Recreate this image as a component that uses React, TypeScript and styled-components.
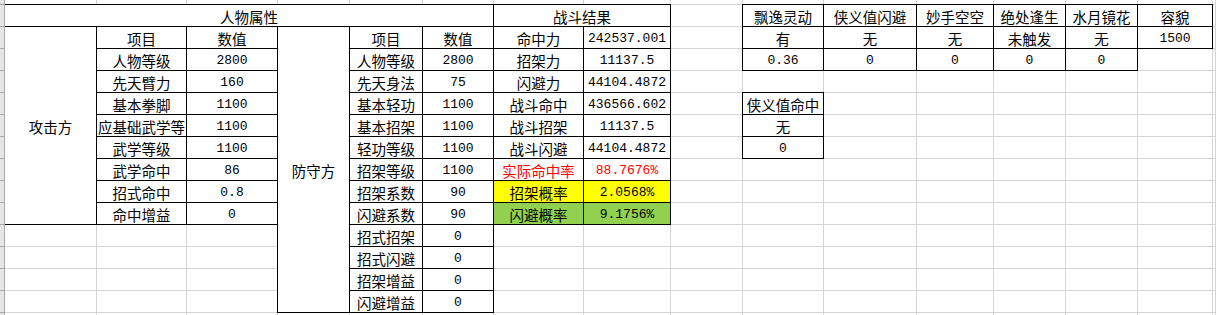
import { createGlobalStyle } from "styled-components";
import styled from "styled-components";

const GlobalStyle = createGlobalStyle`
  html, body {
    margin: 0;
    padding: 0;
    background: #FFFFFF;
    overflow: hidden;
  }
`;

// column widths include the 1px gridline on the right of each column
const COL_WIDTHS = [5, 92, 90, 91, 72, 73, 71, 90, 87, 72, 81, 93, 77, 72, 72, 75, 3];
const ROW_COUNT = 16; // partial top row, 14 sheet rows, partial bottom row

type Tone = "red" | "yellow" | "green";

interface CellData {
  r: number; // sheet row, 1 based
  c: number; // sheet column, A = 1
  rs?: number;
  cs?: number;
  text?: string;
  boxed?: boolean;
  tone?: Tone;
}

const Sheet = styled.div`
  display: grid;
  grid-template-columns: ${COL_WIDTHS.map((w) => `${w}px`).join(" ")};
  grid-template-rows: 5px repeat(14, 22px) 3px;
  width: 1216px;
  height: 315px;
  overflow: hidden;
  font-family: "Noto Sans CJK SC", "Noto Sans", sans-serif;
  font-size: 14.5px;
  color: #000000;
`;

const RowHeader = styled.div<{ $r: number }>`
  grid-column: 1;
  grid-row: ${(p) => p.$r};
  background: #E6E6E6;
  border-right: 1px solid #A9A9A9;
  border-bottom: 1px solid #A9A9A9;
  position: relative;
  z-index: 2;
`;

const toneBg: Record<Tone, string> = {
  red: "transparent",
  yellow: "#FFFF00",
  green: "#92D050",
};

const Cell = styled.div<{
  $r: number;
  $c: number;
  $rs: number;
  $cs: number;
  $boxed: boolean;
  $tone?: Tone;
  $num: boolean;
}>`
  grid-row: ${(p) => p.$r} / span ${(p) => p.$rs};
  grid-column: ${(p) => p.$c} / span ${(p) => p.$cs};
  display: flex;
  align-items: center;
  justify-content: center;
  padding-top: 1px;
  white-space: nowrap;
  min-width: 0;
  border-right: 1px solid ${(p) => (p.$boxed ? "#000000" : "#D4D4D4")};
  border-bottom: 1px solid ${(p) => (p.$boxed ? "#000000" : "#D4D4D4")};
  background: ${(p) => (p.$tone ? toneBg[p.$tone] : "transparent")};
  color: ${(p) => (p.$tone === "red" ? "#FF0000" : "#000000")};
  font-family: ${(p) =>
    p.$num ? `"Liberation Mono", "DejaVu Sans Mono", monospace` : `"Noto Sans CJK SC", sans-serif`};
  font-size: ${(p) => (p.$num ? "13px" : "14.5px")};
  ${(p) =>
    p.$boxed &&
    `
    position: relative;
    z-index: 1;
    box-shadow: -1px -1px 0 #000000, 0 -1px 0 #000000, -1px 0 0 #000000;
  `}
`;

const pairs = (
  col: number,
  startRow: number,
  rows: [string, string, Tone?][]
): CellData[] =>
  rows.flatMap(([label, value, tone], i) => [
    { r: startRow + i, c: col, text: label, boxed: true, tone },
    { r: startRow + i, c: col + 1, text: value, boxed: true, tone },
  ]);

const cells: CellData[] = [
  { r: 1, c: 1, cs: 6, text: "人物属性", boxed: true },
  { r: 1, c: 7, cs: 2, text: "战斗结果", boxed: true },
  { r: 2, c: 1, rs: 9, text: "攻击方", boxed: true },
  { r: 2, c: 4, rs: 13, text: "防守方", boxed: true },
  ...pairs(2, 2, [
    ["项目", "数值"],
    ["人物等级", "2800"],
    ["先天臂力", "160"],
    ["基本拳脚", "1100"],
    ["应基础武学等", "1100"],
    ["武学等级", "1100"],
    ["武学命中", "86"],
    ["招式命中", "0.8"],
    ["命中增益", "0"],
  ]),
  ...pairs(5, 2, [
    ["项目", "数值"],
    ["人物等级", "2800"],
    ["先天身法", "75"],
    ["基本轻功", "1100"],
    ["基本招架", "1100"],
    ["轻功等级", "1100"],
    ["招架等级", "1100"],
    ["招架系数", "90"],
    ["闪避系数", "90"],
    ["招式招架", "0"],
    ["招式闪避", "0"],
    ["招架增益", "0"],
    ["闪避增益", "0"],
  ]),
  ...pairs(7, 2, [
    ["命中力", "242537.001"],
    ["招架力", "11137.5"],
    ["闪避力", "44104.4872"],
    ["战斗命中", "436566.602"],
    ["战斗招架", "11137.5"],
    ["战斗闪避", "44104.4872"],
    ["实际命中率", "88.7676%", "red"],
    ["招架概率", "2.0568%", "yellow"],
    ["闪避概率", "9.1756%", "green"],
  ]),
  ...[
    ["飘逸灵动", "有", "0.36"],
    ["侠义值闪避", "无", "0"],
    ["妙手空空", "无", "0"],
    ["绝处逢生", "未触发", "0"],
    ["水月镜花", "无", "0"],
    ["容貌", "1500", ""],
  ].flatMap(([head, state, value], i) => [
    { r: 1, c: 10 + i, text: head, boxed: true },
    { r: 2, c: 10 + i, text: state, boxed: true },
    ...(value ? [{ r: 3, c: 10 + i, text: value, boxed: true }] : []),
  ]),
  { r: 5, c: 10, text: "侠义值命中", boxed: true },
  { r: 6, c: 10, text: "无", boxed: true },
  { r: 7, c: 10, text: "0", boxed: true },
];

// fill every grid slot not covered by a data cell with a plain gridline cell
const buildGrid = () => {
  const taken = new Set<string>();
  const placed = cells.map((cell) => {
    const rs = cell.rs ?? 1;
    const cs = cell.cs ?? 1;
    for (let r = cell.r; r < cell.r + rs; r++)
      for (let c = cell.c; c < cell.c + cs; c++) taken.add(`${r}:${c}`);
    return { ...cell, rs, cs };
  });
  const blanks: CellData[] = [];
  for (let r = 0; r < ROW_COUNT; r++)
    for (let c = 1; c < COL_WIDTHS.length; c++)
      if (!taken.has(`${r}:${c}`)) blanks.push({ r, c, rs: 1, cs: 1 });
  return [...blanks, ...placed];
};

const isNum = (text?: string) => !!text && /^[\d.%]+$/.test(text);

const App = () => {
  const grid = buildGrid();
  return (
    <>
      <GlobalStyle />
      <Sheet>
        {Array.from({ length: ROW_COUNT }, (_, i) => (
          <RowHeader key={`h${i}`} $r={i + 1} />
        ))}
        {grid.map((cell) => (
          <Cell
            key={`${cell.r}-${cell.c}`}
            $r={cell.r + 1}
            $c={cell.c + 1}
            $rs={cell.rs ?? 1}
            $cs={cell.cs ?? 1}
            $boxed={!!cell.boxed}
            $tone={cell.tone}
            $num={isNum(cell.text)}
          >
            {cell.text}
          </Cell>
        ))}
      </Sheet>
    </>
  );
};

export default App;
